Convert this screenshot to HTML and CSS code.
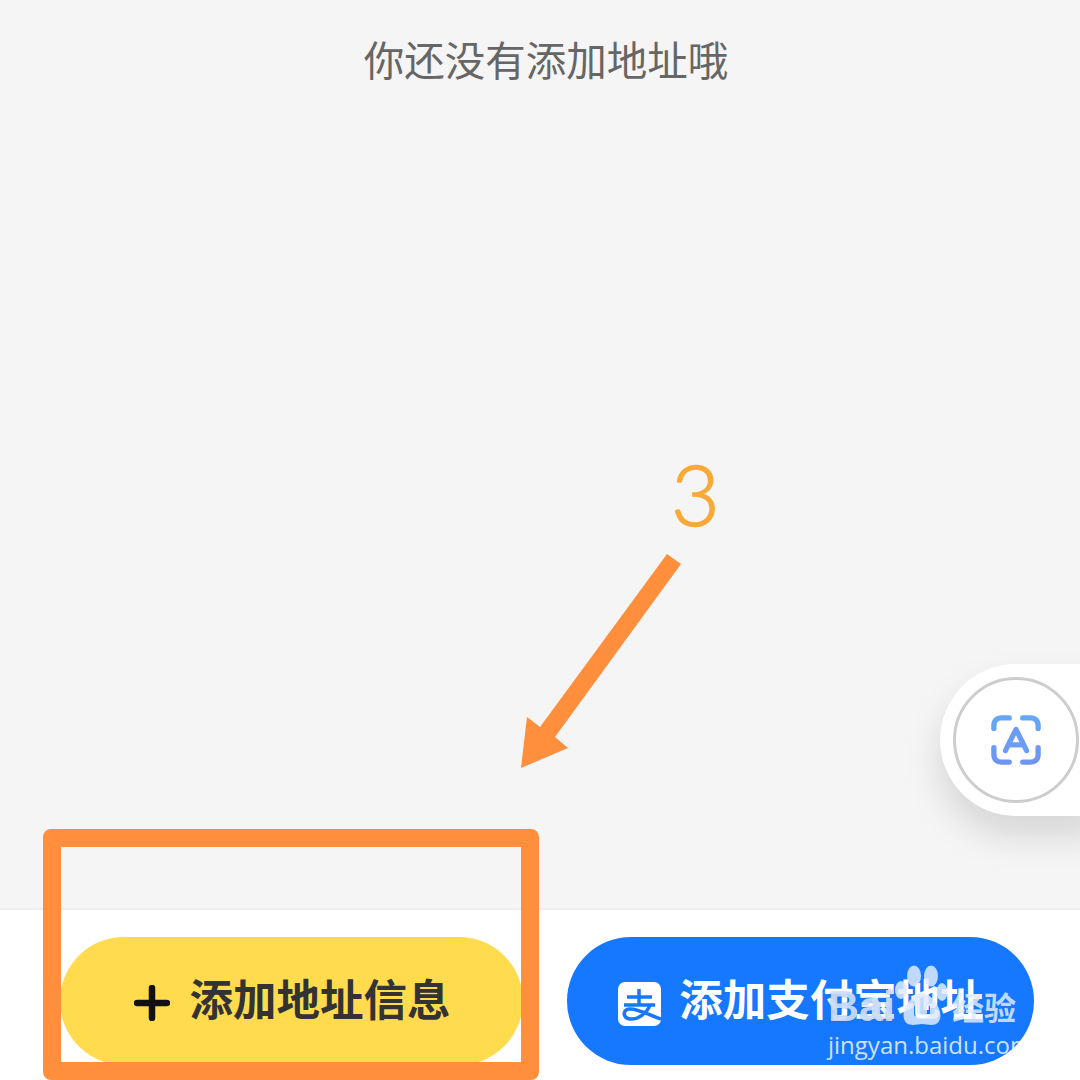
FILE: index.html
```html
<!DOCTYPE html>
<html>
<head>
    <title>地址管理</title>
    <link rel="stylesheet" href="styles.css">
</head>
<body>
    <div class="page">
        <div class="main">
            <p class="empty-text">你还没有添加地址哦</p>
        </div>
        <div class="footer">
            <div class="btn btn-yellow">
                <svg class="plus-icon" viewBox="0 0 36 36"><path d="M18 3V33M3 18H33" stroke="#111" stroke-width="6.500" stroke-linecap="round" fill="none"/></svg>
                <span class="btn-label">添加地址信息</span>
            </div>
            <div class="btn btn-blue">
                <svg class="alipay-icon" viewBox="0 0 43 44">
                    <rect width="43" height="44" rx="7" fill="#fff"/>
                    <path d="M9 15H34M21 7V23M6 23H37" stroke="#1677ff" stroke-width="3.500" fill="none"/>
                    <path d="M32 23C29 31 20 38 12 37C5 36 4 28 11 27C19 26 31 33 43 37" stroke="#1677ff" stroke-width="3.500" fill="none"/>
                </svg>
                <span class="btn-label">添加支付宝地址</span>
            </div>
        </div>

        <div class="step-num">3</div>
        <svg class="arrow" viewBox="0 0 170 220">
            <path d="M147 4L161 14L35 187L48 198L1 218L7 167L20 177Z" fill="#ff8f3c"/>
        </svg>
        <div class="frame"></div>

        <div class="float-btn">
            <div class="float-circle">
                <svg class="scan-icon" viewBox="0 0 52 52">
                    <defs>
                        <linearGradient id="scanGrad" x1="0" y1="0" x2="0" y2="1">
                            <stop offset="0" stop-color="#62a8f6"/>
                            <stop offset="1" stop-color="#6f94f2"/>
                        </linearGradient>
                    </defs>
                    <path d="M3 14V11C3 6 6 3 11 3H19M33 3H41C46 3 49 6 49 11V14M49 34V41C49 46 46 49 41 49H33M19 49H11C6 49 3 46 3 41V34" stroke="url(#scanGrad)" stroke-width="5.500" stroke-linecap="round" fill="none"/>
                    <path d="M15 37L26 15L37 37M18.500 31H33.500" stroke="#6c9df4" stroke-width="5.500" stroke-linecap="round" stroke-linejoin="round" fill="none"/>
                </svg>
            </div>
        </div>

        <div class="watermark">
            <div class="wm-top">
                <span class="wm-bai">Bai</span>
                <svg class="wm-paw" viewBox="0 0 52 62">
                    <ellipse cx="19" cy="11" rx="7" ry="10.500"/>
                    <ellipse cx="36" cy="11" rx="7" ry="10.500"/>
                    <ellipse cx="6" cy="25" rx="6" ry="9"/>
                    <ellipse cx="47" cy="27" rx="5.500" ry="9"/>
                    <path fill-rule="evenodd" d="M27 28C36 28 48 44 45 54C42 63 33 59 27 59C21 59 12 63 9 54C6 44 18 28 27 28ZM19 41V49C19 54 35 54 35 49V41H32V48C32 50 22 50 22 48V41Z"/>
                </svg>
                <span class="wm-jy">经验</span>
            </div>
            <div class="wm-url">jingyan.baidu.com</div>
        </div>
    </div>
</body>
</html>
```

FILE: styles.css
```css
html, body {
    margin: 0;
    padding: 0;
}
body {
    font-family: "Noto Sans CJK SC", "Noto Sans", sans-serif;
    background-color: #f5f5f5;
}
.page {
    position: relative;
    width: 1080px;
    height: 1080px;
    overflow: hidden;
    display: flex;
    flex-direction: column;
}
.main {
    flex-grow: 1;
    background-color: #f5f5f5;
}
.empty-text {
    margin: 0;
    padding: 30px 0 0 12px;
    text-align: center;
    font-size: 40.500px;
    line-height: 58px;
    color: #666666;
}
.footer {
    height: 172px;
    box-sizing: border-box;
    background-color: #ffffff;
    border-top: 2px solid #eeeeee;
    padding: 27px 46px 0 60px;
    display: flex;
    justify-content: space-between;
}
.btn {
    height: 128px;
    border-radius: 64px;
    display: flex;
    align-items: center;
    justify-content: center;
    font-size: 43.500px;
    font-weight: 700;
}
.btn-label {
    position: relative;
    top: -4px;
    left: 1px;
}
.btn-yellow {
    width: 463px;
    background-color: #ffdb4d;
    color: #333333;
    gap: 19px;
}
.btn-blue {
    width: 467px;
    background-color: #1677ff;
    color: #ffffff;
    gap: 17px;
}
.plus-icon {
    width: 36px;
    height: 36px;
    margin-top: 4px;
}
.alipay-icon {
    width: 43px;
    height: 44px;
    margin-top: 6px;
}
.step-num {
    position: absolute;
    left: 671px;
    top: 444px;
    font-family: Lato, sans-serif;
    font-weight: 300;
    font-size: 84px;
    line-height: 100px;
    color: #f9a937;
    -webkit-text-stroke: 1.5px #f9a937;
}
.arrow {
    position: absolute;
    left: 520px;
    top: 550px;
    width: 170px;
    height: 220px;
}
.frame {
    position: absolute;
    left: 43px;
    top: 829px;
    width: 460px;
    height: 215px;
    border: 18px solid #ff8f3c;
    border-radius: 8px;
}
.float-btn {
    position: absolute;
    left: 940px;
    top: 664px;
    width: 160px;
    height: 152px;
    box-sizing: border-box;
    padding: 13px;
    background-color: #ffffff;
    border-radius: 76px 0 0 76px;
    box-shadow: 0 20px 36px rgba(0, 0, 0, 0.13);
}
.float-circle {
    width: 126px;
    height: 126px;
    box-sizing: border-box;
    border: 3px solid #cdcdcd;
    border-radius: 50%;
    display: flex;
    align-items: center;
    justify-content: center;
}
.scan-icon {
    width: 50px;
    height: 50px;
}
.watermark {
    position: absolute;
    left: 828px;
    top: 965px;
    width: 200px;
    color: rgba(222, 234, 255, 0.85);
}
.wm-top {
    display: flex;
    align-items: flex-end;
    height: 62px;
}
.wm-bai {
    font-family: "Liberation Sans", sans-serif;
    font-weight: 700;
    font-size: 43px;
    line-height: 42px;
    width: 67px;
    text-shadow: 0 0 2px rgba(20, 80, 170, 0.6);
}
.wm-paw {
    width: 52px;
    height: 62px;
    fill: rgba(222, 234, 255, 0.85);
}
.wm-jy {
    font-size: 32px;
    font-weight: 700;
    line-height: 42px;
    margin-left: 5px;
    white-space: nowrap;
}
.wm-url {
    font-family: "Open Sans", sans-serif;
    font-size: 24px;
    line-height: 32px;
    margin-top: 2px;
    white-space: nowrap;
    color: rgba(255, 255, 255, 0.8);
}
```
